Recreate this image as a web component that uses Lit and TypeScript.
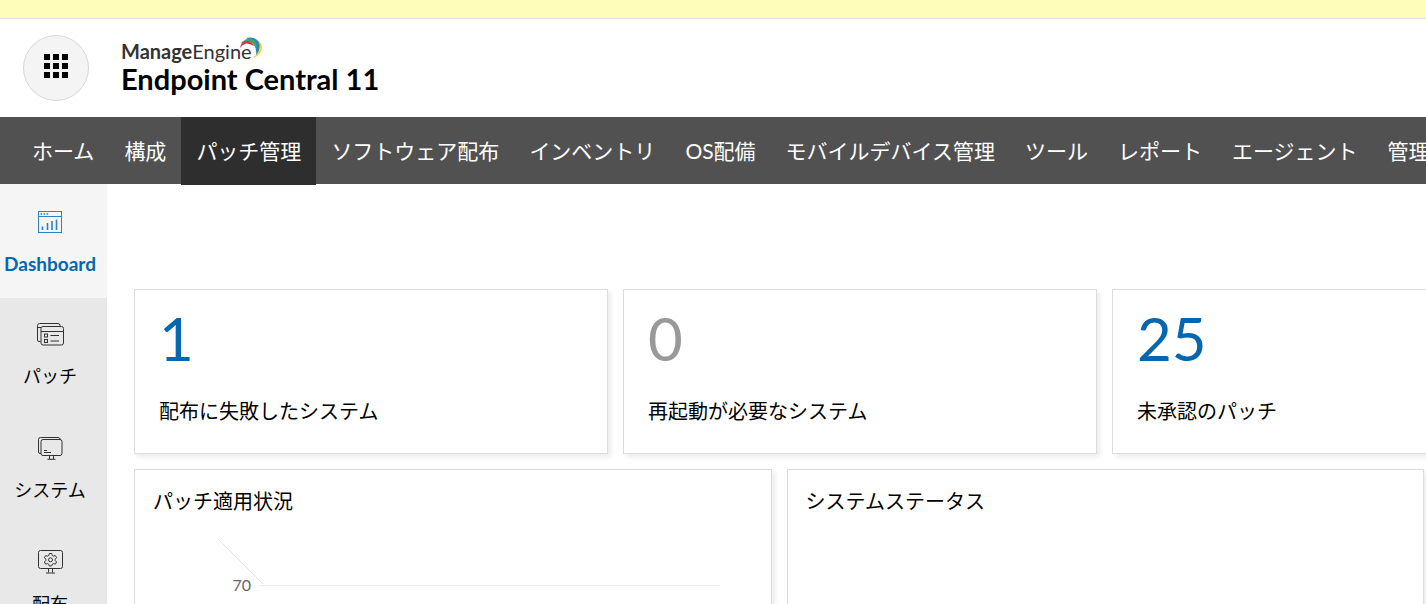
import { LitElement, html, css, svg } from "lit";
import { customElement, property } from "lit/decorators.js";
import { classMap } from "lit/directives/class-map.js";

const NAV = [
  "ホーム", "構成", "パッチ管理", "ソフトウェア配布", "インベントリ", "OS配備",
  "モバイルデバイス管理", "ツール", "レポート", "エージェント", "管理",
];

const ICONS: Record<string, unknown> = {
  dashboard: svg`
    <rect x="2.5" y="1.5" width="23" height="21"/>
    <path d="M2.5 6.500H25.5"/>
    <path d="M4.5 4H6.2M7.5 4H9.2M10.5 4H12.2" stroke-width="1.4"/>
    <path d="M6.500 20V16.500M11.500 20V13M16 20V11M20.500 20V9.500" stroke-width="1.6"/>`,
  patch: svg`
    <path d="M4.5 19.5H3Q1.5 19.5 1.5 18V3.500Q1.500 1.500 3.500 1.500H22Q24 1.500 24 3.500V4.500"/>
    <path d="M1.500 5.500H5"/>
    <rect x="5" y="4.500" width="22.500" height="18.500" rx="2"/>
    <path d="M5 9.500H27.500"/>
    <rect x="8.500" y="12" width="3" height="3"/>
    <rect x="8.500" y="17.500" width="3" height="3"/>
    <path d="M14.500 13.500H23M14.500 19H23"/>`,
  system: svg`
    <path d="M5 17.500H4Q2.500 17.500 2.500 16V3.500Q2.500 1.500 4.500 1.500H22Q24 1.500 24.300 3.500"/>
    <rect x="5" y="3.500" width="21" height="16" rx="2"/>
    <path d="M8 14.500H11M8 16.500H15M13.500 19.500V23M17.500 19.500V23M11.500 23.300H19.500"/>`,
  deploy: svg`
    <rect x="2.500" y="0.500" width="24" height="18" rx="2"/>
    <path d="M12.500 18.500V22.500M16.500 18.500V22.500M10 23H19"/>
    <path d="M13.300 3.500h2.400l.5 1.900 1.300.7 1.900-.5 1.200 2.100-1.400 1.400v1.500l1.400 1.400-1.200 2.100-1.900-.5-1.300.7-.5 1.700h-2.400l-.5-1.700-1.300-.7-1.900.5-1.200-2.100 1.400-1.400v-1.500l-1.400-1.400 1.200-2.100 1.900.5 1.300-.7z"/>
    <circle cx="14.500" cy="9.800" r="2"/>`,
};

@customElement("side-item")
class SideItem extends LitElement {
  @property() icon = "";
  @property() label = "";
  @property({ type: Boolean }) active = false;

  static styles = css`
    :host { display: block; }
    .item {
      display: flex; flex-direction: column; align-items: center; gap: 16px;
      box-sizing: border-box; height: 114px; padding: 24px 7px 0 0;
      color: #000; text-decoration: none;
      font-size: 18px; line-height: 28px; white-space: nowrap;
    }
    .active { background: #f5f5f5; color: #0667ae; font-size: 19px; font-weight: 700; padding-top: 26px; }
    .icon { display: block; flex: none; fill: none; stroke: #333; stroke-width: 1; }
    .active .icon { stroke: #2a83c4; }
  `;

  render() {
    return html`<a href="#" class=${classMap({ item: true, active: this.active })}>
      <svg class="icon" width="29" height="24" viewBox="0 0 29 24" overflow="visible" aria-hidden="true">${ICONS[this.icon]}</svg>
      <span>${this.label}</span>
    </a>`;
  }
}

@customElement("stat-card")
class StatCard extends LitElement {
  @property() value = "";
  @property() label = "";

  static styles = css`
    :host { display: block; }
    .card {
      box-sizing: border-box; height: 165px; padding: 12px 24px;
      border: 1px solid #dcdcdc; background: #fff;
      box-shadow: 3px 3px 5px rgba(0, 0, 0, 0.08);
    }
    .value { display: block; font-size: 60px; line-height: 72px; color: #0667ae; text-decoration: none; }
    .zero { color: #999; }
    .label { margin: 22px 0 0; font-size: 20px; line-height: 30px; color: #000; }
  `;

  render() {
    return html`<div class="card">
      <a href="#" class=${classMap({ value: true, zero: this.value === "0" })}>${this.value}</a>
      <p class="label">${this.label}</p>
    </div>`;
  }
}

@customElement("app-root")
class AppRoot extends LitElement {
  static styles = css`
    :host {
      display: flex; flex-direction: column; height: 100vh; overflow: hidden;
      background: #fff; color: #000;
      font-family: Lato, "Noto Sans CJK JP", sans-serif;
    }
    .notice { flex: none; height: 18px; background: #fffdb9; border-bottom: 1px solid #dcdcdc; }
    .header { flex: none; display: flex; align-items: center; gap: 32px; height: 98px; padding: 0 23px; }
    .apps {
      display: grid; place-items: center; width: 66px; height: 66px; padding: 0 0 4px;
      border: 1px solid #d8d8d8; border-radius: 50%; background: #f4f4f4; cursor: pointer;
    }
    .brand { position: relative; display: flex; flex-direction: column; white-space: nowrap; padding-bottom: 2px; }
    .maker { font-size: 20px; line-height: 24px; color: #333; }
    .maker-strong { font-weight: 700; }
    .product { font-size: 29px; line-height: 32px; font-weight: 700; }
    .swoosh { position: absolute; left: 118px; top: -2px; }
    .nav { flex: none; display: flex; height: 67px; padding-left: 17px; background: #515151; }
    .tab {
      flex: none; padding: 0 15px; color: #fff; text-decoration: none;
      font-size: 21px; line-height: 67px; height: 67px; white-space: nowrap;
    }
    .tab-active { height: 68px; background: #2e2e2e; z-index: 1; }
    .body { flex: 1; min-height: 0; display: flex; }
    .side { flex: none; width: 107px; background: #e8e8e8; overflow: hidden; }
    .main {
      flex: 1; min-width: 0; overflow: hidden; padding: 105px 2px 0 27px;
      display: flex; flex-direction: column; gap: 15px;
    }
    .stats { flex: none; display: grid; grid-template-columns: repeat(3, minmax(474px, 1fr)); gap: 15px; }
    .panels { flex: 1; display: grid; grid-template-columns: 1fr 1fr; gap: 15px; }
    .panel {
      box-sizing: border-box; min-height: 300px; padding: 16px 18px; border: 1px solid #dcdcdc;
      background: #fff; box-shadow: 3px 3px 5px rgba(0, 0, 0, 0.08);
    }
    .panel-title { margin: 0; font-size: 20px; line-height: 30px; font-weight: 400; }
    .plot { padding: 22px 32px 0 64px; }
    .chart { display: block; width: 100%; height: 200px; }
    .tick { font-size: 16px; fill: #666; }
    .grid-line { stroke: #ededed; }
    .depth-line { stroke: #e4e4e4; }
  `;

  render() {
    return html`
      <div class="notice"></div>
      <header class="header">
        <button class="apps" aria-label="Apps">
          <svg width="24" height="24" viewBox="0 0 24 24" aria-hidden="true">
            ${[0, 9, 18].map((y) => [0, 9, 18].map((x) => svg`<rect x=${x} y=${y} width="6" height="6"/>`))}
          </svg>
        </button>
        <div class="brand">
          <span class="maker"><span class="maker-strong">Manage</span>Engine</span>
          <span class="product">Endpoint Central 11</span>
          <svg class="swoosh" width="24" height="24" viewBox="0 0 24 24" aria-hidden="true">
            <path d="M13 1Q22 3 23 10Q23 18 13 21.500Q20 16 19 10Q18 5 13 1z" fill="#fbd02d"/>
            <path d="M7 1Q18 -1 20.500 7Q21 14 17 18Q18 12 15 8Q12 3 7 1z" fill="#2488c9"/>
            <path d="M3 5Q9 -1 15 3Q18 6 18 12Q14 5 9 5Q6 5 2 7z" fill="#3fa667"/>
            <path d="M1 11Q2 4 9 4Q13 5 15 9Q10 6 7 6.500Q3 7.500 1 11z" fill="#df2f3f"/>
          </svg>
        </div>
      </header>
      <nav class="nav">
        ${NAV.map((t) => html`<a href="#" class=${classMap({ tab: true, "tab-active": t === "パッチ管理" })}>${t}</a>`)}
      </nav>
      <div class="body">
        <aside class="side">
          <side-item icon="dashboard" label="Dashboard" active></side-item>
          <side-item icon="patch" label="パッチ"></side-item>
          <side-item icon="system" label="システム"></side-item>
          <side-item icon="deploy" label="配布"></side-item>
        </aside>
        <main class="main">
          <section class="stats">
            <stat-card value="1" label="配布に失敗したシステム"></stat-card>
            <stat-card value="0" label="再起動が必要なシステム"></stat-card>
            <stat-card value="25" label="未承認のパッチ"></stat-card>
          </section>
          <section class="panels">
            <article class="panel">
              <h2 class="panel-title">パッチ適用状況</h2>
              <div class="plot">
                <svg class="chart" role="img" aria-label="パッチ適用状況">
                  <path class="depth-line" d="M1 1L46 46" fill="none"/>
                  <line class="grid-line" x1="42" x2="100%" y1="47.5" y2="47.5"/>
                  <text class="tick" x="34" y="53" text-anchor="end">70</text>
                </svg>
              </div>
            </article>
            <article class="panel">
              <h2 class="panel-title">システムステータス</h2>
            </article>
          </section>
        </main>
      </div>
    `;
  }
}
